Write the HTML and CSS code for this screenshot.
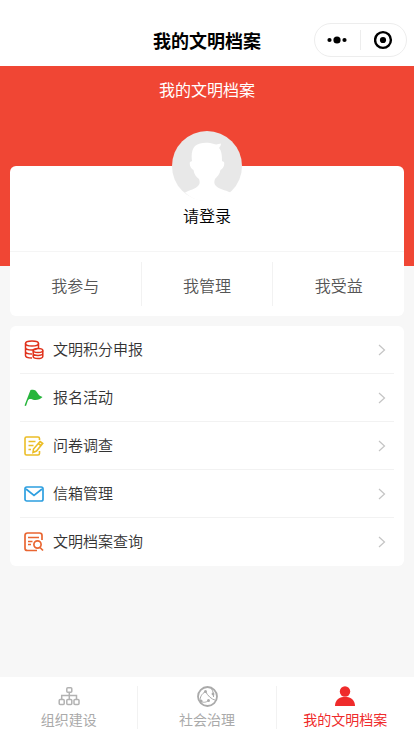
FILE: index.html
```html
<!DOCTYPE html>
<html lang="zh-CN">
<head>
<meta charset="utf-8">
<meta name="viewport" content="width=device-width, initial-scale=1">
<title>我的文明档案</title>
<link rel="stylesheet" href="styles.css">
</head>
<body>
<header class="navbar">
  <h1 class="navbar-title">我的文明档案</h1>
  <div class="capsule">
    <button class="capsule-btn" type="button" aria-label="更多">
      <svg width="22" height="20" viewBox="0 0 22 20"><circle cx="2.500" cy="10" r="2.100"/><circle cx="10" cy="10" r="3.600"/><circle cx="17.500" cy="10" r="2.100"/></svg>
    </button>
    <button class="capsule-btn" type="button" aria-label="关闭">
      <svg width="20" height="20" viewBox="0 0 20 20"><circle cx="9" cy="10" r="7.900" fill="none" stroke="#000" stroke-width="2.400"/><circle cx="9" cy="10" r="3.100"/></svg>
    </button>
  </div>
</header>

<main class="content">
  <div class="hero"><h2 class="hero-title">我的文明档案</h2></div>

  <section class="card profile">
    <a class="login" href="#login">
      <svg class="avatar" viewBox="0 0 70 70">
        <circle cx="35" cy="35" r="35" fill="#e8e8e8"/>
        <path fill="#fff" d="M13 61.500C18 59 23 58 26 55C28 53 28 51 27 48C24 46 22 43 21.500 39C19 38 17 34 18 31L20 30C19 24 20 18 23 15C28 11 36 11 42 13C44 14 47 13 49 12.500C49 14 48 16 47 17C50 20 50 26 50 30L52 31C53 34 51 38 48.500 39C48 43 45 46 43 48C42 51 42 53 44 55C47 58 53 59 58.500 61.500C47 73 24 73 13 61.500Z"/>
      </svg>
      <span class="login-text">请登录</span>
    </a>
    <nav class="tabs">
      <a class="tab" href="#join">我参与</a>
      <a class="tab" href="#manage">我管理</a>
      <a class="tab" href="#benefit">我受益</a>
    </nav>
  </section>

  <nav class="card menu">
    <a class="menu-item" href="#points">
      <svg class="menu-icon" viewBox="0 0 20 20" fill="none" stroke="#e0321c" stroke-width="1.500"><ellipse cx="8" cy="3.500" rx="6.500" ry="2.500"/><path d="M1.500 3.500V15.500C1.500 17 4 18 8 18M14.500 3.500V8M1.500 7.500C1.500 9.200 4.500 10 8 10M1.500 11.500C1.500 13.200 4.500 14 8 14M8 10C10 10 12 9.500 13.500 8.500"/><ellipse cx="14" cy="10.500" rx="4.800" ry="2"/><path d="M9.200 10.500V16.500C9.200 19.200 18.800 19.200 18.800 16.500V10.500M9.200 13.500C9.200 16 18.800 16 18.800 13.500"/></svg>
      <span class="menu-text">文明积分申报</span>
      <svg class="arrow" viewBox="0 0 8 12"><path d="M1 1L6.500 6L1 11"/></svg>
    </a>
    <a class="menu-item" href="#activity">
      <svg class="menu-icon" viewBox="0 0 20 20"><path fill="#27b53c" d="M6.500 2C10 1 12 2 13.500 5C14.500 7 16 8 18.500 9C16 11.500 12 13 8.500 11.500C6 10.500 4.500 11 3.700 13L2 18L.5 17.500Z"/></svg>
      <span class="menu-text">报名活动</span>
      <svg class="arrow" viewBox="0 0 8 12"><path d="M1 1L6.500 6L1 11"/></svg>
    </a>
    <a class="menu-item" href="#survey">
      <svg class="menu-icon" viewBox="0 0 20 20" fill="none" stroke="#ebbd26" stroke-width="1.600"><path d="M15.500 4V2.500Q15.500 1 14 1H2.500Q1 1 1 2.500V17.500Q1 19 2.500 19H14Q15.500 19 15.500 17.500V15M4.500 5.500H11.500M4.500 9.500H9.500M4.500 13.500H7"/><path d="M16 5.500L18.700 7.500L12.500 15L9 16.500L9.500 13ZM14.300 7.500L17 9.500"/></svg>
      <span class="menu-text">问卷调查</span>
      <svg class="arrow" viewBox="0 0 8 12"><path d="M1 1L6.500 6L1 11"/></svg>
    </a>
    <a class="menu-item" href="#mail">
      <svg class="menu-icon" viewBox="0 0 20 20" fill="none" stroke="#2d9fe0" stroke-width="1.700"><rect x="1" y="3" width="18" height="14" rx="1.800"/><path d="M2 5L10 11.500L18 5"/></svg>
      <span class="menu-text">信箱管理</span>
      <svg class="arrow" viewBox="0 0 8 12"><path d="M1 1L6.500 6L1 11"/></svg>
    </a>
    <a class="menu-item" href="#records">
      <svg class="menu-icon" viewBox="0 0 20 20" fill="none" stroke="#e96632" stroke-width="1.700"><path d="M18 8V3.500Q18 1 15.500 1H3.500Q1 1 1 3.500V16.500Q1 18.500 3.500 18.500H13M4 5.500H15M4 9.500H8.500M4 12.500H7"/><circle cx="13.500" cy="12.500" r="3.600"/><path d="M16 15.500L19 18.500"/></svg>
      <span class="menu-text">文明档案查询</span>
      <svg class="arrow" viewBox="0 0 8 12"><path d="M1 1L6.500 6L1 11"/></svg>
    </a>
  </nav>
</main>

<nav class="tabbar">
  <a class="tabbar-item" href="#org">
    <svg class="tabbar-icon" viewBox="0 0 22 22" fill="none" stroke="#b2b2b2" stroke-width="1.500"><rect x="8.800" y="1.800" width="5" height="4.500" rx="1"/><rect x="1.200" y="13.500" width="5" height="5" rx="1"/><rect x="8.800" y="13.500" width="5" height="5" rx="1"/><rect x="16" y="13.500" width="5" height="5" rx="1"/><path d="M11.300 6.500V13.500M3.700 13.500V9.500H18.500V13.500"/></svg>
    <span>组织建设</span>
  </a>
  <a class="tabbar-item" href="#social">
    <svg class="tabbar-icon" viewBox="0 0 22 22" fill="none" stroke="#aaa" stroke-width="1"><circle cx="11.500" cy="10.500" r="9.500" stroke-width="1.800"/><path d="M4 15C4 11 5.500 8 9.500 5.500C12 10 15 13 20 14.500M4 15C7 17 10 16.500 12.500 14.500M15 2C17 5 18 8 17.500 11"/><g fill="#aaa" stroke="none"><circle cx="9.500" cy="5.500" r="1.500"/><circle cx="5" cy="15" r="1.600"/><circle cx="17" cy="8" r="1.400"/><circle cx="12.500" cy="14.500" r="1.500"/></g></svg>
    <span>社会治理</span>
  </a>
  <a class="tabbar-item active" href="#mine" aria-current="page">
    <svg class="tabbar-icon" viewBox="0 0 22 22" fill="#ef2b2b"><circle cx="11" cy="5.500" r="5.200"/><path d="M1 20C1 14 5 11.500 9 11H13C17 11.500 21 14 21 20Z"/></svg>
    <span>我的文明档案</span>
  </a>
</nav>
</body>
</html>
```
FILE: styles.css
```css
* { box-sizing: border-box; }

body {
  margin: 0;
  min-height: 100vh;
  display: flex;
  flex-direction: column;
  background: #f7f7f7;
  color: #000;
  font-family: "Noto Sans CJK SC", sans-serif;
  font-size: 16px;
}

a { color: inherit; text-decoration: none; }
svg { display: block; }

.navbar {
  display: grid;
  grid-template-columns: 1fr auto 1fr;
  align-items: center;
  height: 66px;
  padding: 14px 0 0;
  background: #fff;
}

.navbar-title {
  grid-column: 2;
  margin: 0;
  font-size: 18px;
  line-height: 24px;
  font-weight: 700;
}

.capsule {
  justify-self: end;
  display: flex;
  width: 93px;
  height: 34px;
  margin-right: 7px;
  border: 1px solid #ededed;
  border-radius: 17px;
}

.capsule-btn {
  flex: 1;
  display: flex;
  align-items: center;
  justify-content: center;
  margin: 6px 0;
  padding: 0;
  border: 0;
  background: none;
}

.capsule-btn + .capsule-btn { border-left: 1px solid #ededed; }

.content { flex: 1; }

.hero {
  height: 200px;
  padding-top: 11px;
  background: #f04634;
}

.hero-title {
  margin: 0;
  color: #fff;
  font-size: 16px;
  line-height: 24px;
  font-weight: 400;
  text-align: center;
}

.card {
  margin: 10px;
  background: #fff;
  border-radius: 6px;
}

.profile {
  position: relative;
  margin-top: -100px;
}

.login {
  display: flex;
  flex-direction: column;
  align-items: center;
  height: 86px;
  border-bottom: 1px solid #f5f5f5;
}

.avatar {
  width: 70px;
  height: 70px;
  margin-top: -35px;
}

.login-text {
  margin-top: 2px;
  line-height: 24px;
  font-weight: 350;
}

.tabs {
  display: flex;
  padding: 10px 0;
}

.tab {
  flex: 1;
  height: 44px;
  color: #555;
  line-height: 46px;
  font-weight: 350;
  text-align: center;
}

.tab:not(:last-child) { border-right: 1px solid #f2f2f2; }

.menu { padding: 0 10px; }

.menu-item {
  display: flex;
  align-items: center;
  height: 48px;
  padding: 0 8px 0 4px;
  border-bottom: 1px solid #f2f2f2;
}

.menu-item:last-child { border-bottom-color: transparent; }

.menu-icon { width: 20px; height: 20px; }

.menu-text {
  flex: 1;
  margin-left: 9px;
  padding-bottom: 2px;
  color: #333;
  font-size: 15px;
  line-height: 24px;
  font-weight: 350;
}

.arrow {
  width: 8px;
  height: 12px;
  fill: none;
  stroke: #c4c4c4;
  stroke-width: 1.2px;
}

.tabbar {
  display: flex;
  padding: 9px 0 7px;
  background: #fff;
}

.tabbar-item {
  flex: 1;
  display: flex;
  flex-direction: column;
  align-items: center;
  gap: 1px;
  color: #aaa;
  font-size: 14px;
  line-height: 20px;
}

.tabbar-item:not(:last-child) { border-right: 1px solid #f2f2f2; }

.tabbar-icon { width: 22px; height: 22px; }

.active { color: #ef2b2b; }
```
